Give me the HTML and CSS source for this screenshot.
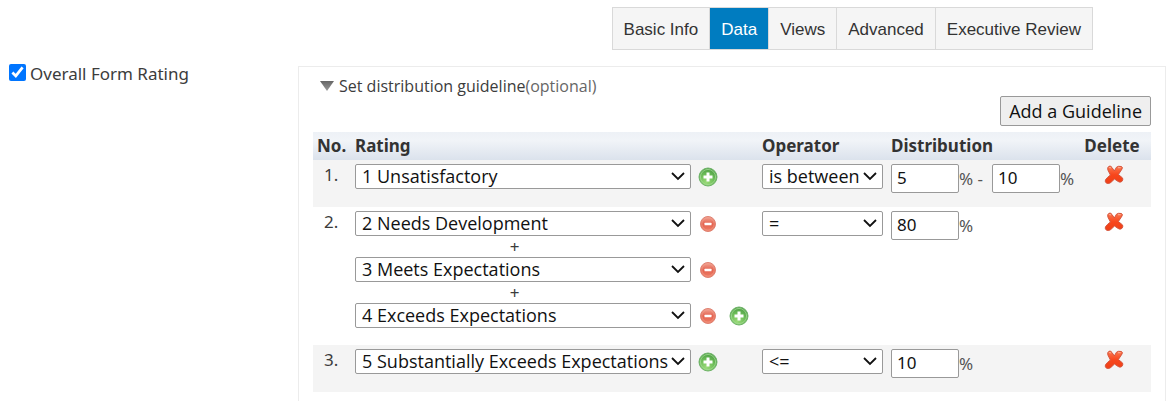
FILE: index.html
```html
<!DOCTYPE html>
<html lang="en">
<head>
<meta charset="utf-8">
<title>Distribution Guidelines</title>
<link rel="stylesheet" href="styles.css">
</head>
<body>
<svg class="defs" aria-hidden="true">
  <defs>
    <radialGradient id="green" cx="40%" cy="80%" r="75%"><stop offset="0" stop-color="#9ada78"/><stop offset=".6" stop-color="#6dbd59"/><stop offset="1" stop-color="#4fa046"/></radialGradient>
    <linearGradient id="red" x1="0" y1="0" x2="0" y2="1"><stop offset="0" stop-color="#f1a595"/><stop offset=".5" stop-color="#e4624f"/><stop offset="1" stop-color="#ee8068"/></linearGradient>
    <linearGradient id="cross" x1="0" y1="0" x2="0" y2="1"><stop offset="0" stop-color="#fb7a52"/><stop offset=".5" stop-color="#f8461c"/><stop offset="1" stop-color="#ef3f16"/></linearGradient>
    <linearGradient id="grey" x1="0" y1="0" x2="0" y2="1"><stop offset="0" stop-color="#666"/><stop offset="1" stop-color="#999"/></linearGradient>
    <symbol id="add" viewBox="0 0 20 20">
      <circle cx="10" cy="10" r="9" fill="url(#green)" stroke="#6fb369" stroke-width="1"/>
      <circle cx="10" cy="10" r="7.6" fill="none" stroke="#a3d994" stroke-width=".8"/>
      <path d="M8.500 5.500h3v3h3v3h-3v3h-3v-3h-3v-3h3z" fill="#fff"/>
    </symbol>
    <symbol id="remove" viewBox="0 0 20 20">
      <circle cx="10" cy="10" r="7.500" fill="url(#red)" stroke="#df8272" stroke-width="1"/>
      <circle cx="10" cy="10" r="6.200" fill="none" stroke="#f2a391" stroke-width=".6"/>
      <rect x="6.500" y="8.700" width="7" height="2.600" rx=".5" fill="#fff"/>
    </symbol>
    <symbol id="delete" viewBox="0 0 20 20">
      <path d="M5 1.200Q7 .800 8 2.500L10.300 6L12.500 2.200Q14 .800 17.500 1.500Q19 2.200 18 4L14.400 9.500L18.600 13Q19.300 15 17.800 16.500Q16 17.800 14.200 16.500L10.500 14L6.800 17.500Q5 19 2.500 18.200Q.800 17 1.400 15Q3 12.500 6.400 10L3.900 5Q3 2.500 5 1.200Z" fill="url(#cross)" stroke="#d4543c" stroke-width="1" stroke-linejoin="round"/>
      <path d="M5.500 2.600L6.700 2.800M14.300 2.700L16.300 2.700" fill="none" stroke="#ffb094" stroke-width="1" stroke-linecap="round"/>
    </symbol>
  </defs>
</svg>
<div class="page">
  <nav class="tabs" aria-label="Sections">
    <a class="tab" href="#basic">Basic Info</a>
    <a class="tab tab-active" href="#data" aria-current="page">Data</a>
    <a class="tab" href="#views">Views</a>
    <a class="tab" href="#advanced">Advanced</a>
    <a class="tab" href="#review">Executive Review</a>
  </nav>
  <main class="content">
    <div class="side">
      <label class="toggle"><input type="checkbox" class="check" checked>Overall Form Rating</label>
    </div>
    <section class="panel">
      <button type="button" class="disclosure" aria-expanded="true">
        <svg class="arrow" viewBox="0 0 16 10" aria-hidden="true"><path d="M1 0h14L8 10z" fill="url(#grey)"/></svg>
        <span>Set distribution guideline<span class="optional">(optional)</span></span>
      </button>
      <div class="actions"><button type="button" class="add-button">Add a Guideline</button></div>
      <table class="grid">
        <thead>
          <tr><th class="col-no">No.</th><th>Rating</th><th class="col-op">Operator</th><th class="col-dist">Distribution</th><th class="col-del">Delete</th></tr>
        </thead>
        <tbody>
          <tr>
            <td class="no">1.</td>
            <td>
              <div class="rating">
                <select class="select" aria-label="Rating"><option>1 Unsatisfactory</option></select>
                <div class="tools"><button type="button" class="icon" aria-label="Add rating"><svg><use href="#add"/></svg></button></div>
              </div>
            </td>
            <td><select class="select operator" aria-label="Operator"><option>is between</option></select></td>
            <td><div class="range"><input class="num" type="text" value="5" aria-label="From percent"><span class="dash">% -</span><input class="num" type="text" value="10" aria-label="To percent">%</div></td>
            <td class="del"><button type="button" class="icon" aria-label="Delete guideline 1"><svg><use href="#delete"/></svg></button></td>
          </tr>
          <tr>
            <td class="no">2.</td>
            <td>
              <div class="rating">
                <select class="select" aria-label="Rating"><option>2 Needs Development</option></select>
                <div class="tools"><button type="button" class="icon" aria-label="Remove rating"><svg><use href="#remove"/></svg></button></div>
              </div>
              <div class="plus">+</div>
              <div class="rating">
                <select class="select" aria-label="Rating"><option>3 Meets Expectations</option></select>
                <div class="tools"><button type="button" class="icon" aria-label="Remove rating"><svg><use href="#remove"/></svg></button></div>
              </div>
              <div class="plus">+</div>
              <div class="rating">
                <select class="select" aria-label="Rating"><option>4 Exceeds Expectations</option></select>
                <div class="tools"><button type="button" class="icon" aria-label="Remove rating"><svg><use href="#remove"/></svg></button><button type="button" class="icon" aria-label="Add rating"><svg><use href="#add"/></svg></button></div>
              </div>
            </td>
            <td><select class="select operator" aria-label="Operator"><option>=</option></select></td>
            <td><div class="range"><input class="num" type="text" value="80" aria-label="Percent">%</div></td>
            <td class="del"><button type="button" class="icon" aria-label="Delete guideline 2"><svg><use href="#delete"/></svg></button></td>
          </tr>
          <tr>
            <td class="no">3.</td>
            <td>
              <div class="rating">
                <select class="select" aria-label="Rating"><option>5 Substantially Exceeds Expectations</option></select>
                <div class="tools"><button type="button" class="icon" aria-label="Add rating"><svg><use href="#add"/></svg></button></div>
              </div>
            </td>
            <td><select class="select operator" aria-label="Operator"><option>&lt;=</option></select></td>
            <td><div class="range"><input class="num" type="text" value="10" aria-label="Percent">%</div></td>
            <td class="del"><button type="button" class="icon" aria-label="Delete guideline 3"><svg><use href="#delete"/></svg></button></td>
          </tr>
        </tbody>
      </table>
    </section>
  </main>
</div>
</body>
</html>
```
FILE: styles.css
```css
* { box-sizing: border-box; }
body {
  margin: 0;
  background: #fff;
  color: #3c3c3c;
  font: 17px/24px "Noto Sans", sans-serif;
}
.defs { position: absolute; width: 0; height: 0; }
.page { display: flex; flex-direction: column; min-height: 100vh; padding: 7px 1px 0 0; }
.tabs {
  display: flex;
  align-self: flex-end;
  margin: 0 73px 16px 0;
  border: 1px solid #d9d9d9;
  background: #f5f5f5;
  font-family: "Liberation Sans", Arial, sans-serif;
}
.tab {
  padding: 10px 11px 7px;
  border-right: 1px solid #d9d9d9;
  color: #333;
  text-decoration: none;
}
.tab:last-child { border-right: 0; }
.tab-active { background: #007cc0; color: #fff; }
.content { display: flex; flex: 1; }
.side { flex: 0 0 298px; padding-left: 9px; }
.toggle { display: flex; align-items: center; gap: 4px; height: 16px; }
.check { width: 17px; height: 17px; margin: 0 0 4px; accent-color: #0075ff; }
.panel {
  flex: 1;
  min-width: 0;
  padding: 9px 14px 0;
  border: solid #ececec;
  border-width: 1px 1px 0;
}
.disclosure {
  display: flex;
  align-items: center;
  gap: 4px;
  padding: 0 0 0 6px;
  border: 0;
  background: none;
  color: #3c3c3c;
  font: 16px/20px "Open Sans", sans-serif;
}
.arrow { width: 16px; height: 10px; }
.optional { color: #666; }
.actions { display: flex; justify-content: flex-end; margin-bottom: 6px; }
.add-button {
  height: 30px;
  padding: 0 8px;
  border: 1px solid #999;
  border-radius: 2px;
  background: #efefef;
  color: #111;
  font: 18px/24px "Open Sans", sans-serif;
}
.grid { width: 100%; border-collapse: collapse; table-layout: fixed; }
th {
  height: 28px;
  padding: 0;
  text-align: left;
  font-weight: 700;
  color: #333;
}
thead tr { background: linear-gradient(#edf1f6, #f1f4f8 30%, #dbe2ec); }
.col-no { width: 42px; padding-left: 4px; }
.col-op { width: 129px; }
.col-dist { width: 186px; }
.col-del { width: 74px; padding-right: 4px; text-align: center; }
td { padding: 4px 0 13px; vertical-align: top; }
tbody tr { height: 47px; }
tbody tr:nth-child(odd) { background: #f4f4f4; }
tbody tr:nth-child(2) td { padding-bottom: 17px; }
td.no { padding: 3px 0 0 11px; }
.rating { display: flex; align-items: center; gap: 7px; height: 25px; }
.rating .select { flex: 1; min-width: 0; }
.tools { display: flex; flex: 0 0 64px; gap: 11px; }
.plus { margin-right: 88px; text-align: center; line-height: 21px; }
.select {
  display: block;
  height: 25px;
  padding: 0 22px 0 6px;
  border: 1px solid #999;
  border-radius: 2px;
  appearance: none;
  background: #fff url("data:image/svg+xml,%3Csvg xmlns='http://www.w3.org/2000/svg' width='14' height='9'%3E%3Cpath d='M1 1l6 6 6-6' fill='none' stroke='%23111' stroke-width='1.800'/%3E%3C/svg%3E") no-repeat right 5px center;
  color: #111;
  font: 18px/23px "Open Sans", sans-serif;
}
.operator { width: 121px; }
.range { display: flex; align-items: center; height: 29px; color: #555; }
.dash { margin-right: 9px; }
.num {
  width: 68px;
  height: 29px;
  padding: 0 5px 2px;
  border: 1px solid #999;
  border-radius: 2px;
  color: #111;
  font: 17px/24px "Noto Sans", sans-serif;
}
.icon { display: block; width: 20px; height: 20px; padding: 0; border: 0; background: none; }
.icon svg { display: block; width: 20px; height: 20px; }
.del { padding-top: 5px; }
.del .icon { margin: 0 auto; }
```
